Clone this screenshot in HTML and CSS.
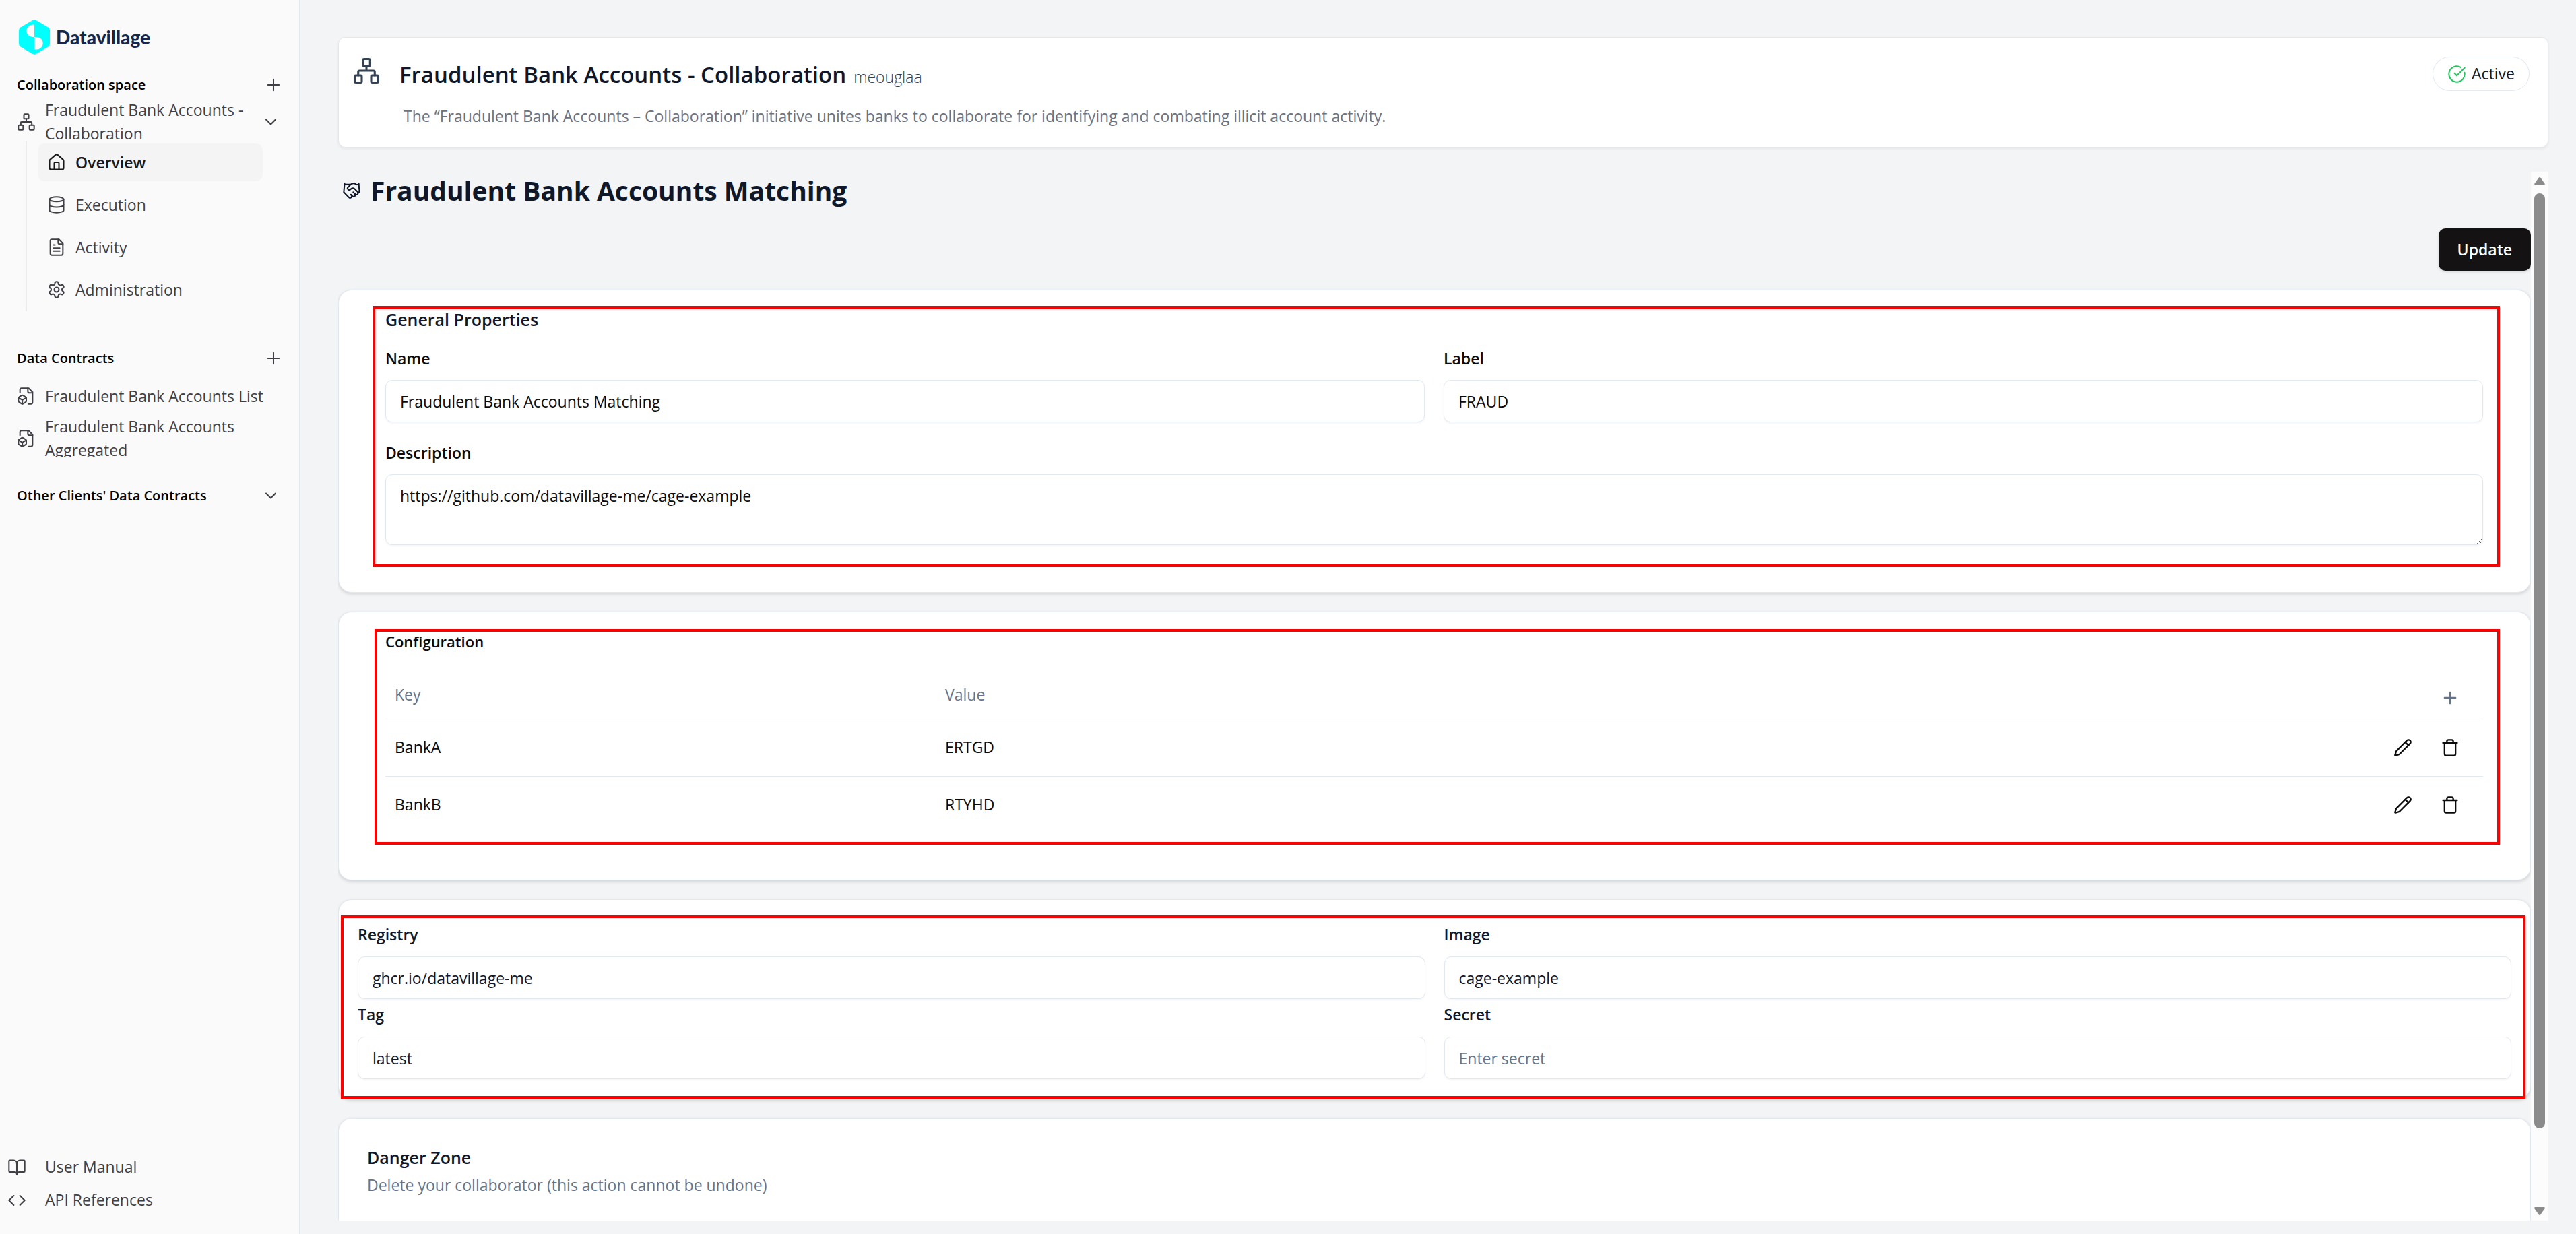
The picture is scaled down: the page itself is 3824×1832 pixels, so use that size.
FILE: index.html
```html
<!DOCTYPE html>
<html lang="en">
<head>
<meta charset="utf-8">
<meta name="viewport" content="width=device-width, initial-scale=1">
<title>Fraudulent Bank Accounts Matching - Datavillage</title>
<link rel="stylesheet" href="styles.css">
</head>
<body>
<svg class="sprite" aria-hidden="true">
  <symbol id="i-plus" viewBox="0 0 24 24"><path d="M5 12h14M12 5v14"/></symbol>
  <symbol id="i-chevron" viewBox="0 0 24 24"><path d="m6 9 6 6 6-6"/></symbol>
  <symbol id="i-network" viewBox="0 0 24 24"><rect x="16" y="16" width="6" height="6" rx="1"/><rect x="2" y="16" width="6" height="6" rx="1"/><rect x="9" y="2" width="6" height="6" rx="1"/><path d="M5 16v-3a1 1 0 0 1 1-1h12a1 1 0 0 1 1 1v3M12 12V8"/></symbol>
  <symbol id="i-home" viewBox="0 0 24 24"><path d="M15 21v-8a1 1 0 0 0-1-1h-4a1 1 0 0 0-1 1v8"/><path d="M3 10a2 2 0 0 1 .709-1.528l7-5.999a2 2 0 0 1 2.582 0l7 5.999A2 2 0 0 1 21 10v9a2 2 0 0 1-2 2H5a2 2 0 0 1-2-2z"/></symbol>
  <symbol id="i-database" viewBox="0 0 24 24"><ellipse cx="12" cy="5" rx="9" ry="3"/><path d="M3 5v14a9 3 0 0 0 18 0V5"/><path d="M3 12a9 3 0 0 0 18 0"/></symbol>
  <symbol id="i-file" viewBox="0 0 24 24"><path d="M15 2H6a2 2 0 0 0-2 2v16a2 2 0 0 0 2 2h12a2 2 0 0 0 2-2V7Z"/><path d="M14 2v4a2 2 0 0 0 2 2h4M10 9H8M16 13H8M16 17H8"/></symbol>
  <symbol id="i-settings" viewBox="0 0 24 24"><path d="M12.22 2h-.44a2 2 0 0 0-2 2v.18a2 2 0 0 1-1 1.73l-.43.25a2 2 0 0 1-2 0l-.15-.08a2 2 0 0 0-2.73.73l-.22.38a2 2 0 0 0 .73 2.73l.15.1a2 2 0 0 1 1 1.72v.51a2 2 0 0 1-1 1.74l-.15.09a2 2 0 0 0-.73 2.73l.22.38a2 2 0 0 0 2.73.73l.15-.08a2 2 0 0 1 2 0l.43.25a2 2 0 0 1 1 1.73V20a2 2 0 0 0 2 2h.44a2 2 0 0 0 2-2v-.18a2 2 0 0 1 1-1.73l.43-.25a2 2 0 0 1 2 0l.15.08a2 2 0 0 0 2.73-.73l.22-.39a2 2 0 0 0-.73-2.73l-.15-.08a2 2 0 0 1-1-1.74v-.5a2 2 0 0 1 1-1.74l.15-.09a2 2 0 0 0 .73-2.73l-.22-.38a2 2 0 0 0-2.73-.73l-.15.08a2 2 0 0 1-2 0l-.43-.25a2 2 0 0 1-1-1.73V4a2 2 0 0 0-2-2z"/><circle cx="12" cy="12" r="3"/></symbol>
  <symbol id="i-filebox" viewBox="0 0 24 24"><path d="M14.5 22H18a2 2 0 0 0 2-2V7l-5-5H6a2 2 0 0 0-2 2v4"/><path d="M14 2v4a2 2 0 0 0 2 2h4"/><path d="M3 13.1a2 2 0 0 0-1 1.76v3.24a2 2 0 0 0 .97 1.78L6 21.7a2 2 0 0 0 2.03.01L11 19.9a2 2 0 0 0 1-1.76V14.9a2 2 0 0 0-.97-1.78L8 11.3a2 2 0 0 0-2.03-.01Z"/><path d="M7 17v5M11.7 14.2 7 17l-4.7-2.8"/></symbol>
  <symbol id="i-book" viewBox="0 0 24 24"><path d="M12 7v14"/><path d="M3 18a1 1 0 0 1-1-1V4a1 1 0 0 1 1-1h5a4 4 0 0 1 4 4 4 4 0 0 1 4-4h5a1 1 0 0 1 1 1v13a1 1 0 0 1-1 1h-6a3 3 0 0 0-3 3 3 3 0 0 0-3-3z"/></symbol>
  <symbol id="i-code" viewBox="0 0 24 24"><path d="m16 18 6-6-6-6M8 6l-6 6 6 6"/></symbol>
  <symbol id="i-check" viewBox="0 0 24 24"><path d="M21.801 10A10 10 0 1 1 17 3.335"/><path d="m9 11 3 3L22 4"/></symbol>
  <symbol id="i-handshake" viewBox="0 0 24 24"><path d="m11 17 2 2a1 1 0 1 0 3-3"/><path d="m14 14 2.5 2.5a1 1 0 1 0 3-3l-3.88-3.88a3 3 0 0 0-4.24 0l-.88.88a1 1 0 1 1-3-3l2.81-2.81a5.79 5.79 0 0 1 7.06-.87l.47.28a2 2 0 0 0 1.42.25L21 4"/><path d="m21 3 1 11h-2M3 3 2 14l6.5 6.5a1 1 0 1 0 3-3M3 4h8"/></symbol>
  <symbol id="i-pencil" viewBox="0 0 24 24"><path d="M21.174 6.812a1 1 0 0 0-3.986-3.987L3.842 16.174a2 2 0 0 0-.5.83l-1.321 4.352a.5.5 0 0 0 .623.622l4.353-1.32a2 2 0 0 0 .83-.497z"/><path d="m15 5 4 4"/></symbol>
  <symbol id="i-trash" viewBox="0 0 24 24"><path d="M3 6h18M19 6v14a2 2 0 0 1-2 2H7a2 2 0 0 1-2-2V6M8 6V4a2 2 0 0 1 2-2h4a2 2 0 0 1 2 2v2"/></symbol>
</svg>
<div class="app">
  <aside class="sidebar">
    <a class="brand" href="#">
      <svg class="brand-mark" viewBox="0 0 46 52" aria-hidden="true"><path d="M20 1.2Q23 -.5 26 1.2L43.500 11.500Q46 13 46 16V36Q46 39 43.500 40.500L26 50.800Q23 52.500 20 50.800L2.500 40.500Q0 39 0 36V16Q0 13 2.500 11.500Z" fill="#00ffff"/><path d="M23 7.500V26H20.500A9.250 9.250 0 0 1 20.500 7.500ZM23 26H26.500A9.250 9.250 0 0 1 26.500 44.500H23Z" fill="#fafafa"/></svg>
      <span>Datavillage</span>
    </a>
    <nav class="nav" aria-label="Main">
      <section class="group">
        <header class="group-head"><h2>Collaboration space</h2><button type="button" aria-label="Add collaboration space"><svg class="icon"><use href="#i-plus"/></svg></button></header>
        <div class="nav-row">
          <a class="nav-link" href="#"><svg class="icon"><use href="#i-network"/></svg><span>Fraudulent Bank Accounts - Collaboration</span></a>
          <button type="button" class="toggle" aria-label="Collapse"><svg class="icon"><use href="#i-chevron"/></svg></button>
        </div>
        <ul class="subnav">
          <li><a class="sub-link active" href="#"><svg class="icon"><use href="#i-home"/></svg>Overview</a></li>
          <li><a class="sub-link" href="#"><svg class="icon"><use href="#i-database"/></svg>Execution</a></li>
          <li><a class="sub-link" href="#"><svg class="icon"><use href="#i-file"/></svg>Activity</a></li>
          <li><a class="sub-link" href="#"><svg class="icon"><use href="#i-settings"/></svg>Administration</a></li>
        </ul>
      </section>
      <section class="group">
        <header class="group-head"><h2>Data Contracts</h2><button type="button" aria-label="Add data contract"><svg class="icon"><use href="#i-plus"/></svg></button></header>
        <ul class="contracts">
          <li><a class="nav-link" href="#"><svg class="icon"><use href="#i-filebox"/></svg><span>Fraudulent Bank Accounts List</span></a></li>
          <li><a class="nav-link" href="#"><svg class="icon"><use href="#i-filebox"/></svg><span>Fraudulent Bank Accounts Aggregated</span></a></li>
        </ul>
      </section>
      <section class="group">
        <header class="group-head"><h2>Other Clients' Data Contracts</h2><button type="button" class="toggle" aria-label="Expand"><svg class="icon"><use href="#i-chevron"/></svg></button></header>
      </section>
    </nav>
    <div class="help">
      <a href="#"><svg class="icon"><use href="#i-book"/></svg>User Manual</a>
      <a href="#"><svg class="icon"><use href="#i-code"/></svg>API References</a>
    </div>
  </aside>

  <main class="main">
    <header class="space-card">
      <svg class="icon space-icon"><use href="#i-network"/></svg>
      <div class="space-text">
        <div class="space-title"><h1>Fraudulent Bank Accounts - Collaboration</h1><span>meouglaa</span></div>
        <p>The “Fraudulent Bank Accounts – Collaboration” initiative unites banks to collaborate for identifying and combating illicit account activity.</p>
      </div>
      <span class="badge"><svg class="icon"><use href="#i-check"/></svg>Active</span>
    </header>

    <div class="scroller">
      <form class="content">
        <h2 class="page-title"><svg class="icon"><use href="#i-handshake"/></svg>Fraudulent Bank Accounts Matching</h2>
        <button type="submit" class="update">Update</button>

        <section class="card general">
          <h3>General Properties</h3>
          <div class="fields">
            <div class="field"><label for="name">Name</label><input id="name" type="text" value="Fraudulent Bank Accounts Matching"></div>
            <div class="field"><label for="label">Label</label><input id="label" type="text" value="FRAUD"></div>
            <div class="field wide"><label for="description">Description</label><textarea id="description">https://github.com/datavillage-me/cage-example</textarea></div>
          </div>
          <div class="mark" aria-hidden="true"></div>
        </section>

        <section class="card config">
          <h3>Configuration</h3>
          <table>
            <thead>
              <tr><th class="key" scope="col">Key</th><th scope="col">Value</th><th class="action"></th><th class="action"><button type="button" aria-label="Add entry"><svg class="icon"><use href="#i-plus"/></svg></button></th></tr>
            </thead>
            <tbody>
              <tr><td>BankA</td><td>ERTGD</td><td class="action"><button type="button" aria-label="Edit BankA"><svg class="icon"><use href="#i-pencil"/></svg></button></td><td class="action"><button type="button" aria-label="Delete BankA"><svg class="icon"><use href="#i-trash"/></svg></button></td></tr>
              <tr><td>BankB</td><td>RTYHD</td><td class="action"><button type="button" aria-label="Edit BankB"><svg class="icon"><use href="#i-pencil"/></svg></button></td><td class="action"><button type="button" aria-label="Delete BankB"><svg class="icon"><use href="#i-trash"/></svg></button></td></tr>
            </tbody>
          </table>
          <div class="mark" aria-hidden="true"></div>
        </section>

        <section class="card registry">
          <div class="fields">
            <div class="field"><label for="registry">Registry</label><input id="registry" type="text" value="ghcr.io/datavillage-me"></div>
            <div class="field"><label for="image">Image</label><input id="image" type="text" value="cage-example"></div>
            <div class="field"><label for="tag">Tag</label><input id="tag" type="text" value="latest"></div>
            <div class="field"><label for="secret">Secret</label><input id="secret" type="text" placeholder="Enter secret"></div>
          </div>
          <div class="mark" aria-hidden="true"></div>
        </section>

        <section class="card danger">
          <h3>Danger Zone</h3>
          <p>Delete your collaborator (this action cannot be undone)</p>
        </section>
      </form>
      <div class="scrollbar" aria-hidden="true">
        <svg viewBox="0 0 16 12"><path d="M6.500 1Q8 -1 9.500 1L15.500 9.500Q16.500 12 14.500 12H1.500Q-.5 12 .5 9.500Z"/></svg>
        <div class="track"><div class="thumb"></div></div>
        <svg viewBox="0 0 16 12"><path d="M6.500 11Q8 13 9.500 11L15.500 2.500Q16.500 0 14.500 0H1.500Q-.5 0 .5 2.500Z"/></svg>
      </div>
    </div>
  </main>
</div>
</body>
</html>
```
FILE: styles.css
```css
:root {
  --border: #e2e8f0;
  --ink: #0f172a;
  --muted: #64748b;
  --side-ink: #3f3f46;
}

* { box-sizing: border-box; }

body {
  margin: 0;
  background: #f3f4f6;
  color: var(--ink);
  font: 400 23px/35px "Open Sans", "Noto Sans", sans-serif;
}

h1, h2, h3, p, ul { margin: 0; padding: 0; }
ul { list-style: none; }
a { color: inherit; text-decoration: none; }

button {
  display: flex;
  padding: 0;
  border: 0;
  background: none;
  color: inherit;
  font: inherit;
  cursor: pointer;
}

.sprite { position: absolute; width: 0; height: 0; }

.icon {
  flex: none;
  width: 28px;
  height: 28px;
  fill: none;
  stroke: currentColor;
  stroke-width: 1.75;
  stroke-linecap: round;
  stroke-linejoin: round;
}

.app { display: flex; height: 100vh; }

/* Sidebar */
.sidebar {
  display: flex;
  flex: none;
  flex-direction: column;
  width: 445px;
  border-right: 1px solid var(--border);
  background: #fafafa;
  color: var(--side-ink);
}

.brand {
  display: flex;
  align-items: center;
  gap: 9px;
  padding: 29px 28px 17px;
  color: #14274e;
  font: 900 28px/52px Lato, sans-serif;
}
.brand-mark { width: 46px; height: 52px; }

.nav { display: flex; flex-direction: column; padding: 0 24px 0 25px; }
.group { padding-bottom: 29px; }
.group:first-child { padding-bottom: 42px; }

.group-head { display: flex; align-items: center; justify-content: space-between; height: 55px; }
.group-head h2 { color: #000; font-size: 20px; font-weight: 600; }
.toggle { margin-right: 4px; }

.nav-row { display: flex; align-items: center; }
.nav-row .nav-link { flex: 1; overflow: visible; }
.nav-link {
  display: flex;
  align-items: center;
  gap: 14px;
  height: 56px;
  overflow: hidden;
}

.subnav {
  display: flex;
  flex-direction: column;
  gap: 7px;
  margin: 0 30px 0 13px;
  padding: 4px 0 4px 16px;
  border-left: 2px solid #ececee;
}
.sub-link {
  display: flex;
  align-items: center;
  gap: 14px;
  height: 56px;
  padding: 0 14px;
  border-radius: 10px;
}
.sub-link.active { background: #f4f4f5; color: #18181b; font-weight: 600; }

.contracts { display: flex; flex-direction: column; gap: 7px; padding-top: 1px; }

.help {
  display: flex;
  flex-direction: column;
  gap: 14px;
  margin-top: auto;
  padding: 0 11px 33px;
}
.help a { display: flex; align-items: center; gap: 28px; }

/* Main column */
.main {
  display: flex;
  flex: 1;
  flex-direction: column;
  min-width: 0;
  padding: 55px 41px 20px 57px;
}

.space-card {
  display: flex;
  align-items: flex-start;
  margin-bottom: 36px;
  padding: 28px 27px 28px 20px;
  border: 1px solid #e5e7eb;
  border-radius: 10px;
  background: #fff;
  box-shadow: 0 2px 4px rgb(0 0 0 / 6%);
}
.space-icon { width: 42px; height: 42px; color: #334155; margin-right: 28px; }
.space-text { flex: 1; min-width: 0; }
.space-title { display: flex; align-items: baseline; gap: 11px; line-height: 54px; }
.space-title h1 { font-size: 33px; font-weight: 600; }
.space-title span { color: #334155; font-weight: 300; }
.space-text p { padding: 14px 0 0 6px; color: #6b7280; }

.badge {
  display: flex;
  align-items: center;
  gap: 8px;
  padding: 7px 21px;
  border: 1px solid var(--border);
  border-radius: 26px;
}
.badge .icon { color: #22c55e; }

/* Scrolling area */
.scroller { display: flex; flex: 1; min-height: 0; }
.content { display: flex; flex: 1; flex-direction: column; min-width: 0; overflow: hidden; }
.content > * { flex: none; }

.page-title {
  display: flex;
  align-items: center;
  gap: 14px;
  padding-left: 6px;
  font-size: 39px;
  font-weight: 700;
  line-height: 56px;
}

.update {
  align-self: flex-end;
  margin: 28px 0;
  padding: 14px 28px;
  border-radius: 10px;
  background: #141213;
  color: #fff;
  font-weight: 600;
  box-shadow: 0 2px 4px rgb(0 0 0 / 12%);
}

.card {
  position: relative;
  margin-bottom: 28px;
  border: 1px solid var(--border);
  border-radius: 20px;
  background: #fff;
  box-shadow: 0 2px 5px rgb(0 0 0 / 14%);
}
.card h3 { font-size: 25px; font-weight: 600; }

.mark { position: absolute; border: 4px solid #f00; pointer-events: none; }

.fields { display: grid; grid-template-columns: 1fr 1fr; column-gap: 28px; }
.wide { grid-column: 1 / -1; }
.field { display: flex; flex-direction: column; }
.field label { font-weight: 600; }
.field input,
.field textarea {
  width: 100%;
  height: 63px;
  padding: 0 21px;
  border: 1px solid var(--border);
  border-radius: 10px;
  background: #fff;
  color: inherit;
  font: inherit;
  box-shadow: 0 2px 3px rgb(0 0 0 / 4%);
}
.field textarea { display: block; height: 105px; padding: 14px 21px; resize: vertical; }
.field ::placeholder { color: var(--muted); opacity: 1; }

.general { padding: 26px 70px 70px 69px; }
.general .field { gap: 14px; color: #0a0a0a; }
.general h3 { margin-bottom: 23px; }
.general .fields { row-gap: 28px; }
.general .mark { inset: 24px 45px 37px 50px; }

.config { padding: 26px 70px 69px 69px; color: #0a0a0a; }
.config h3 { margin-bottom: 26px; font-size: 22px; }
.config .mark { inset: 25px 45px 52px 53px; }

table { width: 100%; border-collapse: collapse; table-layout: fixed; }
th, td { height: 85px; padding: 0 14px; text-align: left; }
th { height: 71px; color: var(--muted); font-weight: 500; }
tr { border-bottom: 1px solid var(--border); }
tbody tr:last-child { border-bottom: 0; }
.key { width: 817px; }
.action { width: 70px; padding: 0; }
.action:last-child { width: 84px; padding-right: 14px; }
.action button { margin: 0 auto; }
th.action { padding-top: 10px; }
.action .icon { stroke-width: 2; }

.registry { padding: 34px 28px 29px; }
.registry .field { gap: 15px; }
.registry .fields { row-gap: 6px; }
.registry .mark { inset: 23px 7px 0 3px; }

.danger { padding: 40px 42px 140px; }
.danger p { padding-top: 6px; color: var(--muted); }

/* Scrollbar */
.scrollbar {
  display: flex;
  flex: none;
  flex-direction: column;
  align-items: center;
  gap: 12px;
  width: 26px;
  padding: 8px 0;
  background: #fcfcfc;
}
.scrollbar svg { flex: none; width: 16px; height: 12px; fill: #8b8b8b; }
.track { flex: 1; width: 16px; }
.thumb { height: 93%; border-radius: 8px; background: #8b8b8b; }
```
